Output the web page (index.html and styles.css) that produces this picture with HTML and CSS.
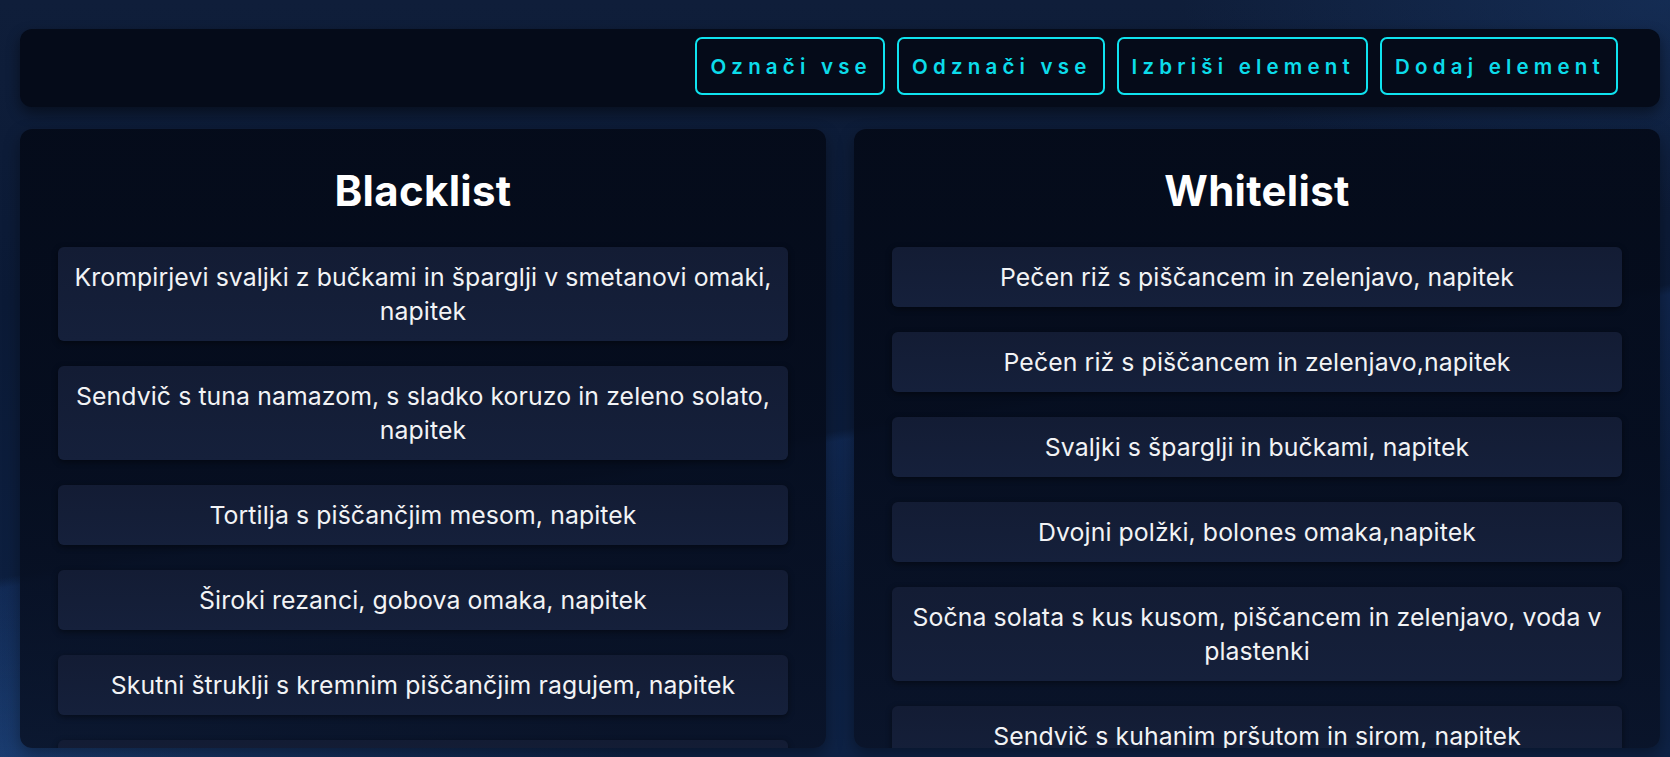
FILE: index.html
```html
<!DOCTYPE html>
<html lang="sl">
<head>
<meta charset="utf-8">
<title>Blacklist / Whitelist</title>
<link rel="stylesheet" href="styles.css">
</head>
<body>
<div class="app">
  <header class="toolbar">
    <button class="btn">Označi vse</button>
    <button class="btn">Odznači vse</button>
    <button class="btn">Izbriši element</button>
    <button class="btn">Dodaj element</button>
  </header>
  <main class="lists">
    <section class="panel">
      <h2 class="panel-title">Blacklist</h2>
      <ul class="items">
        <li class="item">Krompirjevi svaljki z bučkami in šparglji v smetanovi omaki, napitek</li>
        <li class="item">Sendvič s tuna namazom, s sladko koruzo in zeleno solato, napitek</li>
        <li class="item">Tortilja s piščančjim mesom, napitek</li>
        <li class="item">Široki rezanci, gobova omaka, napitek</li>
        <li class="item">Skutni štruklji s kremnim piščančjim ragujem, napitek</li>
        <li class="item">Polnozrnati sendvič s sirom in zelenjavo, napitek</li>
      </ul>
    </section>
    <section class="panel">
      <h2 class="panel-title">Whitelist</h2>
      <ul class="items">
        <li class="item">Pečen riž s piščancem in zelenjavo, napitek</li>
        <li class="item">Pečen riž s piščancem in zelenjavo,napitek</li>
        <li class="item">Svaljki s šparglji in bučkami, napitek</li>
        <li class="item">Dvojni polžki, bolones omaka,napitek</li>
        <li class="item">Sočna solata s kus kusom, piščancem in zelenjavo, voda v plastenki</li>
        <li class="item">Sendvič s kuhanim pršutom in sirom, napitek</li>
      </ul>
    </section>
  </main>
</div>
</body>
</html>
```

FILE: styles.css
```css
html, body {
  height: 100%;
}

body {
  margin: 0;
  overflow: hidden;
  font-family: Inter, "Noto Sans", "DejaVu Sans", sans-serif;
  background-color: #0b1a36;
  background-image:
    radial-gradient(ellipse 900px 260px at 0% 100%, rgba(40, 90, 160, 0.45), transparent 70%),
    radial-gradient(ellipse 700px 300px at 100% 0%, rgba(30, 70, 130, 0.35), transparent 70%),
    linear-gradient(170deg, transparent 55%, rgba(30, 70, 140, 0.25) 56%, transparent 75%),
    linear-gradient(180deg, #0f1e3a 0%, #0b1a36 40%, #0e2245 100%);
}

.app {
  box-sizing: border-box;
  height: 100vh;
  padding: 29px 10px 9px 20px;
  display: flex;
  flex-direction: column;
  gap: 22px;
}

.toolbar {
  box-sizing: border-box;
  flex: 0 0 78px;
  display: flex;
  justify-content: flex-end;
  align-items: flex-start;
  gap: 12px;
  padding: 8px 42px 0;
  background: #050b19;
  border-radius: 12px;
  box-shadow: 0 6px 14px rgba(0, 0, 0, 0.45);
}

.btn {
  box-sizing: border-box;
  height: 58px;
  padding: 0 11px 0 13px;
  background: transparent;
  border: 2px solid #0fe3ef;
  border-radius: 7px;
  color: #0cdcea;
  font-family: Inter, "Noto Sans", sans-serif;
  font-weight: 600;
  font-size: 20.5px;
  letter-spacing: 5.2px;
  cursor: pointer;
}

.lists {
  flex: 1;
  min-height: 0;
  display: grid;
  grid-template-columns: 1fr 1fr;
  gap: 28px;
}

.panel {
  box-sizing: border-box;
  min-height: 0;
  overflow: hidden;
  padding: 32px 38px 0;
  background: linear-gradient(180deg, rgba(4, 10, 24, 0.92) 0%, rgba(5, 12, 28, 0.9) 50%, rgba(9, 18, 38, 0.86) 100%);
  border-radius: 12px;
  box-shadow: 0 6px 16px rgba(0, 0, 0, 0.35);
}

.panel-title {
  margin: 0 0 26px;
  font-size: 42px;
  line-height: 60px;
  font-weight: 700;
  letter-spacing: 0.3px;
  text-align: center;
  color: #ffffff;
}

.items {
  list-style: none;
  margin: 0;
  padding: 0;
  display: flex;
  flex-direction: column;
  gap: 25px;
}

.item {
  padding: 13px 6px;
  background: linear-gradient(180deg, #131c34, #15203b);
  border-radius: 6px;
  font-size: 24.8px;
  line-height: 34px;
  letter-spacing: 0.1px;
  text-align: center;
  color: #f2f3f5;
  box-shadow: 0 2px 6px rgba(0, 0, 0, 0.45);
}
```
